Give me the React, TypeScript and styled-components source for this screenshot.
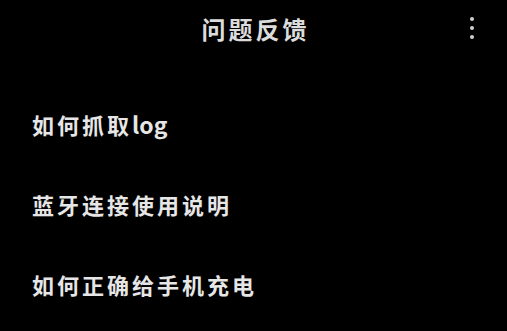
import { createGlobalStyle } from "styled-components";
import styled from "styled-components";

const GlobalStyle = createGlobalStyle`
  html, body {
    margin: 0;
    padding: 0;
    background: #000;
  }
  body {
    font-family: "Noto Sans CJK SC", "Noto Sans", sans-serif;
  }
`;

const Page = styled.div`
  width: 507px;
  height: 331px;
  background: #000;
  color: #e4e4e4;
  display: flex;
  flex-direction: column;
  overflow: hidden;
`;

const TopBar = styled.header`
  height: 56px;
  display: grid;
  grid-template-columns: 56px 1fr 56px;
  align-items: center;
`;

const Title = styled.h1`
  grid-column: 2;
  margin: 0;
  padding-left: 4px;
  text-align: center;
  font-size: 24px;
  font-weight: 700;
  letter-spacing: 3px;
  color: #dcdcdc;
`;

const MoreButton = styled.button`
  grid-column: 3;
  justify-self: center;
  margin-left: -14px;
  background: none;
  border: none;
  padding: 4px 8px;
  display: flex;
  flex-direction: column;
  gap: 4.5px;
  cursor: pointer;
`;

const Dot = styled.span`
  width: 4.5px;
  height: 4.5px;
  border-radius: 50%;
  background: #d0d0d0;
`;

const List = styled.ul`
  list-style: none;
  margin: 0;
  padding: 28px 0 0;
`;

const Item = styled.li`
  height: 80px;
  display: flex;
  align-items: center;
  padding-left: 32px;
  font-size: 22px;
  font-weight: 700;
  letter-spacing: 3px;
  color: #e6e6e6;
`;

const Latin = styled.span`
  letter-spacing: 0;
  font-size: 23px;
`;

const questions = ["如何抓取log", "蓝牙连接使用说明", "如何正确给手机充电"];

// split latin runs so they keep normal spacing
const renderText = (text: string) =>
  text.split(/([A-Za-z]+)/).map((part, i) =>
    /^[A-Za-z]+$/.test(part) ? <Latin key={i}>{part}</Latin> : part
  );

export default function App() {
  return (
    <>
      <GlobalStyle />
      <Page>
        <TopBar>
          <Title>问题反馈</Title>
          <MoreButton aria-label="更多">
            <Dot />
            <Dot />
            <Dot />
          </MoreButton>
        </TopBar>
        <List>
          {questions.map((q) => (
            <Item key={q}>{renderText(q)}</Item>
          ))}
        </List>
      </Page>
    </>
  );
}
